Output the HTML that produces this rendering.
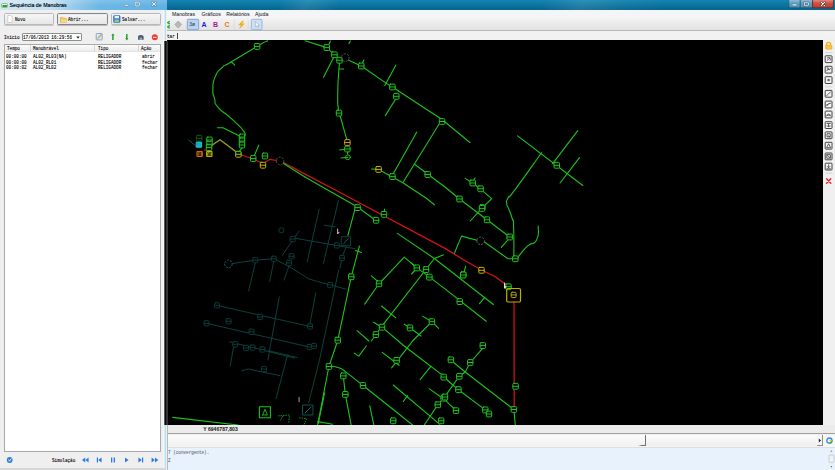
<!DOCTYPE html>
<html lang="pt">
<head>
<meta charset="utf-8">
<title>Sequência de Manobras</title>
<style>
html,body{margin:0;padding:0;}
body{width:835px;height:470px;overflow:hidden;position:relative;background:#f0f0f0;font-family:"Liberation Sans",sans-serif;}
.abs{position:absolute;}
.t{position:absolute;white-space:nowrap;line-height:1;color:#222;}
.mono{font-family:"Liberation Mono",monospace;font-size:17.2px !important;transform:scale(0.25,0.315);transform-origin:0 0;color:#0a0a0a;text-shadow:0 0 1.4px rgba(0,0,0,0.5);}
/* left window */
#ltitle{left:0;top:0;width:167px;height:10.4px;background:linear-gradient(rgba(255,255,255,0.16),rgba(255,255,255,0) 60%),linear-gradient(90deg,#cfe7f6 0%,#c2e0f4 30%,#9ccdec 42%,#84c2e8 50%,#6ab7e5 60%,#5fb1e3 100%);}
#lbody{left:0;top:10px;width:164px;height:458px;background:#efefef;}
#lborderR{left:163px;top:10px;width:3.3px;height:460px;background:linear-gradient(90deg,#f6f9fb 0%,#f0f6fa 45%,#bfe2f2 55%,#b5dcef 100%);}
#mapedge{left:163.8px;top:40.5px;width:4px;height:384.5px;background:linear-gradient(90deg,#c9c9cc 0%,#5a5a5c 12%,#060608 25%,#0a0a0c 40%,#303032 55%,#363638 88%,#101010 100%);}
#lbottom{left:0;top:468px;width:166px;height:2px;background:#d6d6d6;}
.btn{position:absolute;top:13px;height:12px;border:1px solid #b8b8b8;border-radius:1.5px;background:linear-gradient(#f6f6f6,#e6e6e6);box-sizing:border-box;box-shadow:0 1px 0 #c9c9c9;}
#table{left:4px;top:44px;width:157px;height:408px;background:#fff;border:1px solid #a9a9a9;box-sizing:border-box;}
#thead{left:5px;top:45px;width:155px;height:6px;background:linear-gradient(#fbfbfb,#ececec);}
/* main window */
#mtitle{left:167px;top:0;width:668px;height:10.4px;background:linear-gradient(115deg,rgba(255,255,255,0) 0%,rgba(255,255,255,0) 17%,rgba(255,255,255,0.10) 21%,rgba(255,255,255,0) 26%,rgba(255,255,255,0) 56%,rgba(255,255,255,0.10) 62%,rgba(255,255,255,0.04) 68%,rgba(255,255,255,0) 74%),linear-gradient(#1585b1 0%,#0c76a2 45%,#07648e 100%);}
#menubar{left:167px;top:10px;width:668px;height:9px;background:#f4f5f7;}
#toolbar{left:167px;top:18px;width:668px;height:13px;background:linear-gradient(#f3f3f3,#e2e2e2);border-bottom:1px solid #b9b9b9;box-sizing:border-box;}
#bar2{left:167px;top:31px;width:668px;height:9.5px;background:#f2f2f2;}
#map{left:167px;top:40.4px;width:655.5px;height:384.5px;background:#000;}
#rtool{left:822.5px;top:39px;width:12.5px;height:386px;background:#f0f0f0;}
#status{left:167px;top:425px;width:668px;height:9px;background:#ebebeb;}
#statusline{left:167px;top:433.4px;width:668px;height:1px;background:#a0a0a0;}
#hscroll{left:167px;top:435px;width:668px;height:12px;background:#f6f6f6;}
#console{left:167px;top:447px;width:668px;height:23px;background:#e7f2fc;border-top:1px solid #dcdfe2;box-sizing:border-box;}
</style>
</head>
<body>
<!-- ===== main window ===== -->
<div class="abs" id="mtitle"></div>
<div class="abs" id="menubar"></div>
<div class="abs" id="toolbar"></div>
<div class="abs" id="bar2"></div>
<div class="abs" id="map"></div>
<!--MAP--><svg class="abs" id="mapsvg" style="left:167px;top:40px" width="656" height="385" viewBox="0 0 656 385" fill="none" stroke-linecap="round" stroke-linejoin="round">
<polyline points="65.6,223.5 88.3,220.2 106.8,218.8 122.0,226.4 142.0,239.0 150.6,241.5 179.3,249.2" stroke="#0c423d" stroke-width="1.0" />
<polyline points="115.2,215.5 132.0,191.1" stroke="#0c423d" stroke-width="1.0" />
<polyline points="125.6,197.8 188.0,208.7" stroke="#0c423d" stroke-width="1.0" />
<polyline points="152.2,169.2 140.1,222.2" stroke="#0c423d" stroke-width="1.0" />
<polyline points="171.5,160.0 156.4,223.5" stroke="#0c423d" stroke-width="1.0" />
<polyline points="157.2,185.2 168.2,186.9" stroke="#0c423d" stroke-width="1.0" />
<polyline points="88.3,223.0 81.6,251.0" stroke="#0c423d" stroke-width="1.0" />
<polyline points="106.8,221.3 102.7,241.5" stroke="#0c423d" stroke-width="1.0" />
<polyline points="122.0,226.0 117.0,240.0" stroke="#0c423d" stroke-width="1.0" />
<polyline points="50.0,265.4 143.0,286.5" stroke="#0c423d" stroke-width="1.0" />
<polyline points="39.5,283.3 144.9,307.6" stroke="#0c423d" stroke-width="1.0" />
<polyline points="62.5,301.8 127.6,318.1" stroke="#0c423d" stroke-width="1.0" />
<polyline points="112.3,256.8 100.8,320.0" stroke="#0c423d" stroke-width="1.0" />
<polyline points="171.7,230.0 152.5,320.0 141.7,362.5" stroke="#0c423d" stroke-width="1.0" />
<polyline points="148.7,253.0 143.0,283.6" stroke="#0c423d" stroke-width="1.0" />
<polyline points="67.0,305.0 63.1,326.0" stroke="#0c423d" stroke-width="1.0" />
<polyline points="74.6,330.9 81.0,329.0 113.0,335.6" stroke="#0c423d" stroke-width="1.0" />
<polyline points="120.6,314.6 109.1,358.6" stroke="#0c423d" stroke-width="1.0" />
<polyline points="101.4,310.7 130.2,317.5" stroke="#0c423d" stroke-width="1.0" />
<polyline points="179.0,207.0 174.9,218.0 173.0,228.0" stroke="#0c423d" stroke-width="1.0" />
<rect x="123.2" y="196.4" width="4.9" height="5.2" rx="0.9" stroke="#0c423d" stroke-width="0.9" fill="#000"/>
<line x1="123.2" y1="199.0" x2="128.0" y2="199.0" stroke="#0c423d" stroke-width="0.9"/>
<rect x="85.9" y="217.6" width="4.9" height="5.2" rx="0.9" stroke="#0c423d" stroke-width="0.9" fill="#000"/>
<line x1="85.9" y1="220.2" x2="90.7" y2="220.2" stroke="#0c423d" stroke-width="0.9"/>
<rect x="104.4" y="216.2" width="4.9" height="5.2" rx="0.9" stroke="#0c423d" stroke-width="0.9" fill="#000"/>
<line x1="104.4" y1="218.8" x2="109.2" y2="218.8" stroke="#0c423d" stroke-width="0.9"/>
<rect x="122.1" y="213.7" width="4.9" height="5.2" rx="0.9" stroke="#0c423d" stroke-width="0.9" fill="#000"/>
<line x1="122.1" y1="216.3" x2="126.9" y2="216.3" stroke="#0c423d" stroke-width="0.9"/>
<rect x="119.6" y="220.4" width="4.9" height="5.2" rx="0.9" stroke="#0c423d" stroke-width="0.9" fill="#000"/>
<line x1="119.6" y1="223.0" x2="124.4" y2="223.0" stroke="#0c423d" stroke-width="0.9"/>
<rect x="167.4" y="202.8" width="4.9" height="5.2" rx="0.9" stroke="#0c423d" stroke-width="0.9" fill="#000"/>
<line x1="167.4" y1="205.4" x2="172.2" y2="205.4" stroke="#0c423d" stroke-width="0.9"/>
<rect x="172.5" y="215.4" width="4.9" height="5.2" rx="0.9" stroke="#0c423d" stroke-width="0.9" fill="#000"/>
<line x1="172.5" y1="218.0" x2="177.3" y2="218.0" stroke="#0c423d" stroke-width="0.9"/>
<rect x="47.6" y="262.8" width="4.9" height="5.2" rx="0.9" stroke="#0c423d" stroke-width="0.9" fill="#000"/>
<line x1="47.6" y1="265.4" x2="52.4" y2="265.4" stroke="#0c423d" stroke-width="0.9"/>
<rect x="90.7" y="274.3" width="4.9" height="5.2" rx="0.9" stroke="#0c423d" stroke-width="0.9" fill="#000"/>
<line x1="90.7" y1="276.9" x2="95.5" y2="276.9" stroke="#0c423d" stroke-width="0.9"/>
<rect x="140.6" y="283.9" width="4.9" height="5.2" rx="0.9" stroke="#0c423d" stroke-width="0.9" fill="#000"/>
<line x1="140.6" y1="286.5" x2="145.4" y2="286.5" stroke="#0c423d" stroke-width="0.9"/>
<rect x="37.1" y="280.7" width="4.9" height="5.2" rx="0.9" stroke="#0c423d" stroke-width="0.9" fill="#000"/>
<line x1="37.1" y1="283.3" x2="41.9" y2="283.3" stroke="#0c423d" stroke-width="0.9"/>
<rect x="59.1" y="278.7" width="4.9" height="5.2" rx="0.9" stroke="#0c423d" stroke-width="0.9" fill="#000"/>
<line x1="59.1" y1="281.3" x2="63.9" y2="281.3" stroke="#0c423d" stroke-width="0.9"/>
<rect x="82.1" y="289.1" width="4.9" height="5.2" rx="0.9" stroke="#0c423d" stroke-width="0.9" fill="#000"/>
<line x1="82.1" y1="291.7" x2="86.9" y2="291.7" stroke="#0c423d" stroke-width="0.9"/>
<rect x="140.1" y="304.4" width="4.9" height="5.2" rx="0.9" stroke="#0c423d" stroke-width="0.9" fill="#000"/>
<line x1="140.1" y1="307.0" x2="144.9" y2="307.0" stroke="#0c423d" stroke-width="0.9"/>
<rect x="144.6" y="303.4" width="4.9" height="5.2" rx="0.9" stroke="#0c423d" stroke-width="0.9" fill="#000"/>
<line x1="144.6" y1="306.0" x2="149.4" y2="306.0" stroke="#0c423d" stroke-width="0.9"/>
<rect x="65.8" y="301.7" width="4.9" height="5.2" rx="0.9" stroke="#0c423d" stroke-width="0.9" fill="#000"/>
<line x1="65.8" y1="304.3" x2="70.6" y2="304.3" stroke="#0c423d" stroke-width="0.9"/>
<rect x="83.1" y="305.0" width="4.9" height="5.2" rx="0.9" stroke="#0c423d" stroke-width="0.9" fill="#000"/>
<line x1="83.1" y1="307.6" x2="87.9" y2="307.6" stroke="#0c423d" stroke-width="0.9"/>
<rect x="93.0" y="306.9" width="4.9" height="5.2" rx="0.9" stroke="#0c423d" stroke-width="0.9" fill="#000"/>
<line x1="93.0" y1="309.5" x2="97.8" y2="309.5" stroke="#0c423d" stroke-width="0.9"/>
<rect x="160.6" y="242.4" width="4.9" height="5.2" rx="0.9" stroke="#0c423d" stroke-width="0.9" fill="#000"/>
<line x1="160.6" y1="245.0" x2="165.4" y2="245.0" stroke="#0c423d" stroke-width="0.9"/>
<rect x="94.6" y="326.4" width="4.9" height="5.2" rx="0.9" stroke="#0c423d" stroke-width="0.9" fill="#000"/>
<line x1="94.6" y1="329.0" x2="99.4" y2="329.0" stroke="#0c423d" stroke-width="0.9"/>
<rect x="76.6" y="305.4" width="4.9" height="5.2" rx="0.9" stroke="#0c423d" stroke-width="0.9" fill="#000"/>
<line x1="76.6" y1="308.0" x2="81.4" y2="308.0" stroke="#0c423d" stroke-width="0.9"/>
<circle cx="114.4" cy="190.3" r="2.6" stroke="#0c423d" stroke-width="0.9" stroke-dasharray="none" stroke-linecap="butt"/>
<circle cx="61.4" cy="223.9" r="3.8" stroke="#1f5f5a" stroke-width="1" stroke-dasharray="2.2 1" stroke-linecap="butt"/>
<rect x="174.6" y="196.7" width="9" height="9" stroke="#0c423d" stroke-width="1" fill="none"/>
<polyline points="176.5,204.0 181.5,198.5" stroke="#16635c" stroke-width="1" />
<rect x="136.0" y="365.0" width="10" height="10" stroke="#11544d" stroke-width="1" fill="none"/>
<polyline points="138.0,373.0 144.0,367.0" stroke="#1a7068" stroke-width="1" />
<path d="M100.5 0.8 C97.0 2.7 102.1 -0.6 90.1 6.4 C78.1 13.4 76.1 14.7 64.4 21.8 C52.7 28.9 60.4 22.9 55.1 27.7 C49.8 32.5 51.5 29.1 48.4 36.1 C45.3 43.1 46.2 41.1 45.9 48.7 C45.6 56.3 45.9 52.6 47.6 58.8 C49.3 65.0 45.3 60.6 50.9 67.2 C56.5 73.8 55.7 70.6 64.4 78.7 C73.1 86.8 73.3 85.8 77.0 91.6 C80.7 97.4 76.0 94.5 75.5 96.0" stroke="#1bc51b" stroke-width="1.1"/>
<polyline points="64.4,21.8 67.7,25.2" stroke="#1bc51b" stroke-width="1.1" />
<polyline points="50.4,87.7 56.0,87.7 72.0,95.8" stroke="#1bc51b" stroke-width="1.1" />
<polyline points="75.0,95.0 75.0,108.0 72.5,111.2" stroke="#1bc51b" stroke-width="1.1" />
<polyline points="91.8,105.0 86.2,118.5" stroke="#1bc51b" stroke-width="1.1" />
<polyline points="138.0,0.8 159.8,7.6 167.4,14.8 172.5,19.3" stroke="#1bc51b" stroke-width="1.1" />
<polyline points="181.7,20.2 194.3,26.0 218.7,42.9 225.4,47.0 275.0,79.5 302.9,102.5" stroke="#1bc51b" stroke-width="1.1" />
<polyline points="167.4,16.0 156.5,37.3" stroke="#1bc51b" stroke-width="1.1" />
<path d="M172.5 21.8 C171.9 31.3 171.1 34.1 170.8 50.4 C170.5 66.7 170.5 61.1 171.6 70.6 C172.7 80.1 171.3 69.5 174.0 79.0 C176.7 88.5 177.8 92.5 179.7 99.2" stroke="#1bc51b" stroke-width="1.1"/>
<polyline points="172.5,29.0 176.7,29.0" stroke="#1bc51b" stroke-width="1.1" />
<polyline points="228.8,25.2 217.8,45.4" stroke="#1bc51b" stroke-width="1.1" />
<polyline points="229.3,58.0 218.3,75.6" stroke="#1bc51b" stroke-width="1.1" />
<polyline points="163.5,1.0 161.7,5.0" stroke="#1bc51b" stroke-width="1.1" />
<polyline points="183.4,1.0 182.0,3.4" stroke="#1bc51b" stroke-width="1.1" />
<polyline points="196.8,20.0 195.0,24.5" stroke="#1bc51b" stroke-width="1.1" />
<polyline points="172.5,110.0 180.4,109.0" stroke="#1bc51b" stroke-width="1.1" />
<polyline points="174.0,118.0 180.9,117.3" stroke="#1bc51b" stroke-width="1.1" />
<polyline points="180.4,105.0 180.6,114.0" stroke="#1bc51b" stroke-width="1.1" />
<polyline points="204.4,129.0 211.6,129.4 225.4,137.0 235.5,142.5 259.0,158.0 267.4,164.8" stroke="#1bc51b" stroke-width="1.1" />
<polyline points="225.4,135.3 249.8,92.1" stroke="#1bc51b" stroke-width="1.1" />
<polyline points="236.3,142.0 274.0,81.0" stroke="#1bc51b" stroke-width="1.1" />
<polyline points="247.2,124.0 278.0,147.0 292.5,159.0 320.0,179.8 342.7,197.0" stroke="#1bc51b" stroke-width="1.1" />
<polyline points="350.6,95.9 415.8,145.5" stroke="#1bc51b" stroke-width="1.1" />
<polyline points="410.8,90.6 385.6,123.6" stroke="#1bc51b" stroke-width="1.1" />
<polyline points="412.5,117.7 393.1,143.0" stroke="#1bc51b" stroke-width="1.1" />
<path d="M374.6 112.7 C365.9 124.7 359.8 133.7 348.6 148.8 C337.4 163.9 343.9 152.9 341.0 158.0 C338.1 163.1 339.6 160.5 339.8 164.0 C340.0 167.5 339.7 163.6 341.5 168.4 C343.3 173.2 343.5 172.3 345.2 178.5 C346.9 184.7 346.0 174.0 346.6 186.9 C347.2 199.8 346.8 207.0 346.9 217.1" stroke="#1bc51b" stroke-width="1.1"/>
<polyline points="298.2,138.4 305.7,143.0 313.3,148.8 324.7,158.6 315.8,167.3 303.2,181.0" stroke="#1bc51b" stroke-width="1.1" />
<polyline points="308.0,138.0 305.7,142.0" stroke="#1bc51b" stroke-width="1.1" />
<polyline points="342.7,197.8 334.3,207.4" stroke="#1bc51b" stroke-width="1.1" />
<polyline points="287.2,213.8 294.5,196.1 309.9,200.3" stroke="#1bc51b" stroke-width="1.1" />
<polyline points="317.5,202.0 341.0,218.8 348.0,218.8" stroke="#1bc51b" stroke-width="1.1" />
<path d="M350.3 218.0 C353.7 214.1 354.0 212.2 360.4 206.2 C366.8 200.2 366.0 206.7 369.6 200.0 C373.2 193.3 370.7 190.7 371.3 186.0" stroke="#1bc51b" stroke-width="1.1"/>
<polyline points="138.0,137.0 160.7,150.0 190.1,166.8 208.6,180.3" stroke="#1bc51b" stroke-width="1.1" />
<polyline points="217.6,169.0 217.3,172.0" stroke="#1bc51b" stroke-width="1.1" />
<polyline points="188.6,166.8 180.9,195.4" stroke="#1bc51b" stroke-width="1.1" />
<polyline points="192.4,206.0 184.2,236.8 170.8,300.2 161.9,326.5 150.6,385.0" stroke="#1bc51b" stroke-width="1.1" />
<polyline points="188.5,210.5 194.5,212.5" stroke="#1bc51b" stroke-width="1.1" />
<polyline points="230.4,193.4 267.4,218.5 282.2,230.0 326.4,264.5" stroke="#1bc51b" stroke-width="1.1" />
<polyline points="197.7,264.1 211.8,244.0 226.7,228.3 237.2,217.1 247.2,225.6 262.4,237.1 278.0,248.9 319.2,281.3" stroke="#1bc51b" stroke-width="1.1" />
<polyline points="276.5,214.8 267.4,218.5 214.5,286.7 204.4,301.0" stroke="#1bc51b" stroke-width="1.1" />
<polyline points="243.9,222.8 249.8,227.9" stroke="#1bc51b" stroke-width="1.1" />
<polyline points="249.8,228.5 244.5,234.0" stroke="#1bc51b" stroke-width="1.1" />
<polyline points="204.4,235.8 212.0,242.5" stroke="#1bc51b" stroke-width="1.1" />
<polyline points="214.5,266.0 228.8,277.8" stroke="#1bc51b" stroke-width="1.1" />
<polyline points="206.6,282.2 215.0,287.2 231.3,301.0 237.2,306.0 278.0,337.1" stroke="#1bc51b" stroke-width="1.1" />
<polyline points="190.1,290.6 201.9,301.0" stroke="#1bc51b" stroke-width="1.1" />
<polyline points="237.2,284.2 243.0,287.9 254.0,296.0" stroke="#1bc51b" stroke-width="1.1" />
<polyline points="255.6,276.1 264.9,281.7 271.6,288.4" stroke="#1bc51b" stroke-width="1.1" />
<polyline points="264.9,281.7 245.6,301.0 240.5,307.7 224.6,327.8" stroke="#1bc51b" stroke-width="1.1" />
<polyline points="317.5,257.7 312.5,263.6" stroke="#1bc51b" stroke-width="1.1" />
<polyline points="298.7,226.4 296.2,234.8" stroke="#1bc51b" stroke-width="1.1" />
<path d="M161.9 326.5 C165.1 326.9 165.6 325.7 171.6 327.8 C177.6 329.9 171.9 327.0 180.0 332.9 C188.1 338.8 174.1 328.1 196.0 345.5 C217.9 362.9 229.1 371.8 245.6 385.0" stroke="#1bc51b" stroke-width="1.1"/>
<polyline points="176.3,335.9 178.3,354.4 184.2,385.0" stroke="#1bc51b" stroke-width="1.1" />
<polyline points="202.7,365.7 206.9,385.0" stroke="#1bc51b" stroke-width="1.1" />
<polyline points="199.3,306.0 191.8,316.1 187.1,313.1" stroke="#1bc51b" stroke-width="1.1" />
<polyline points="215.3,312.4 232.1,325.3" stroke="#1bc51b" stroke-width="1.1" />
<polyline points="264.0,326.2 253.1,339.6" stroke="#1bc51b" stroke-width="1.1" />
<polyline points="226.2,345.0 272.5,384.2" stroke="#1bc51b" stroke-width="1.1" />
<polyline points="240.5,355.6 236.3,361.5" stroke="#1bc51b" stroke-width="1.1" />
<polyline points="262.4,348.9 278.0,359.8 289.0,370.7" stroke="#1bc51b" stroke-width="1.1" />
<polyline points="270.8,364.8 257.3,385.0" stroke="#1bc51b" stroke-width="1.1" />
<polyline points="150.6,381.6 165.7,384.2" stroke="#1bc51b" stroke-width="1.1" />
<polyline points="283.9,320.3 298.2,332.0 346.9,369.5" stroke="#1bc51b" stroke-width="1.1" />
<polyline points="316.3,307.7 303.2,322.5 298.2,332.0 292.3,336.3 278.0,356.4 270.8,364.8" stroke="#1bc51b" stroke-width="1.1" />
<polyline points="278.0,338.0 286.4,345.5 291.4,349.7 318.3,369.9 322.0,374.0" stroke="#1bc51b" stroke-width="1.1" />
<polyline points="346.9,369.5 348.3,385.0" stroke="#1bc51b" stroke-width="1.1" />
<polyline points="5.7,377.4 71.0,385.0" stroke="#1bc51b" stroke-width="1.1" />
<polyline points="157.6,352.9 151.3,383.5" stroke="#1bc51b" stroke-width="1.1" />
<polyline points="111.0,375.9 122.5,375.0 121.6,383.5" stroke="#11901a" stroke-width="1.0" stroke-dasharray="1.6 0.9" stroke-linecap="butt"/>
<polyline points="116.0,376.0 113.0,381.0" stroke="#11901a" stroke-width="1.0" stroke-dasharray="1.6 0.9" stroke-linecap="butt"/>
<polyline points="132.1,377.8 139.8,378.8 137.0,384.5" stroke="#11901a" stroke-width="1.0" stroke-dasharray="1.6 0.9" stroke-linecap="butt"/>
<polyline points="37.5,110.0 45.0,111.5" stroke="#d41414" stroke-width="1.2" />
<polyline points="71.4,114.0 86.2,119.0 96.0,123.5 103.0,119.3 109.5,120.5" stroke="#d41414" stroke-width="1.2" />
<polyline points="116.5,122.5 138.0,134.1 168.3,150.0 278.0,208.4 296.5,219.7 314.1,229.7 328.4,236.7 338.5,244.3" stroke="#d41414" stroke-width="1.25" />
<polyline points="347.0,262.0 347.2,367.0" stroke="#d41414" stroke-width="1.25" />
<polyline points="116.5,123.5 138.0,137.0" stroke="#1bc51b" stroke-width="1.1" />
<polyline points="45.3,105.4 53.0,100.1 69.7,112.5" stroke="#c8501a" stroke-width="1.1" />
<polyline points="45.3,104.8 53.0,99.5 69.7,111.9" stroke="#5cc81e" stroke-width="1.0" />
<polyline points="21.5,100.0 29.0,106.0" stroke="#14504a" stroke-width="1" />
<rect x="87.4" y="3.5" width="5.4" height="5.8" rx="0.9" stroke="#1bc51b" stroke-width="1.0" fill="#000"/>
<line x1="87.4" y1="6.4" x2="92.8" y2="6.4" stroke="#1bc51b" stroke-width="1.0"/>
<rect x="72.3" y="94.1" width="5.4" height="5.8" rx="0.9" stroke="#1bc51b" stroke-width="1.0" fill="#000"/>
<line x1="72.3" y1="97.0" x2="77.7" y2="97.0" stroke="#1bc51b" stroke-width="1.0"/>
<rect x="72.3" y="98.1" width="5.4" height="5.8" rx="0.9" stroke="#1bc51b" stroke-width="1.0" fill="#000"/>
<line x1="72.3" y1="101.0" x2="77.7" y2="101.0" stroke="#1bc51b" stroke-width="1.0"/>
<rect x="72.3" y="102.1" width="5.4" height="5.8" rx="0.9" stroke="#1bc51b" stroke-width="1.0" fill="#000"/>
<line x1="72.3" y1="105.0" x2="77.7" y2="105.0" stroke="#1bc51b" stroke-width="1.0"/>
<rect x="157.1" y="4.7" width="5.4" height="5.8" rx="0.9" stroke="#1bc51b" stroke-width="1.0" fill="#000"/>
<line x1="157.1" y1="7.6" x2="162.5" y2="7.6" stroke="#1bc51b" stroke-width="1.0"/>
<rect x="164.7" y="11.9" width="5.4" height="5.8" rx="0.9" stroke="#1bc51b" stroke-width="1.0" fill="#000"/>
<line x1="164.7" y1="14.8" x2="170.1" y2="14.8" stroke="#1bc51b" stroke-width="1.0"/>
<rect x="169.8" y="17.3" width="5.4" height="5.8" rx="0.9" stroke="#1bc51b" stroke-width="1.0" fill="#000"/>
<line x1="169.8" y1="20.2" x2="175.2" y2="20.2" stroke="#1bc51b" stroke-width="1.0"/>
<rect x="191.6" y="23.1" width="5.4" height="5.8" rx="0.9" stroke="#1bc51b" stroke-width="1.0" fill="#000"/>
<line x1="191.6" y1="26.0" x2="197.0" y2="26.0" stroke="#1bc51b" stroke-width="1.0"/>
<rect x="222.7" y="44.1" width="5.4" height="5.8" rx="0.9" stroke="#1bc51b" stroke-width="1.0" fill="#000"/>
<line x1="222.7" y1="47.0" x2="228.1" y2="47.0" stroke="#1bc51b" stroke-width="1.0"/>
<rect x="226.6" y="53.4" width="5.4" height="5.8" rx="0.9" stroke="#1bc51b" stroke-width="1.0" fill="#000"/>
<line x1="226.6" y1="56.3" x2="232.0" y2="56.3" stroke="#1bc51b" stroke-width="1.0"/>
<rect x="169.3" y="70.2" width="5.4" height="5.8" rx="0.9" stroke="#1bc51b" stroke-width="1.0" fill="#000"/>
<line x1="169.3" y1="73.1" x2="174.7" y2="73.1" stroke="#1bc51b" stroke-width="1.0"/>
<rect x="272.3" y="78.6" width="5.4" height="5.8" rx="0.9" stroke="#1bc51b" stroke-width="1.0" fill="#000"/>
<line x1="272.3" y1="81.5" x2="277.7" y2="81.5" stroke="#1bc51b" stroke-width="1.0"/>
<rect x="177.7" y="106.1" width="5.4" height="5.8" rx="0.9" stroke="#1bc51b" stroke-width="1.0" fill="#000"/>
<line x1="177.7" y1="109.0" x2="183.1" y2="109.0" stroke="#1bc51b" stroke-width="1.0"/>
<rect x="222.7" y="133.7" width="5.4" height="5.8" rx="0.9" stroke="#1bc51b" stroke-width="1.0" fill="#000"/>
<line x1="222.7" y1="136.6" x2="228.1" y2="136.6" stroke="#1bc51b" stroke-width="1.0"/>
<rect x="258.0" y="131.6" width="5.4" height="5.8" rx="0.9" stroke="#1bc51b" stroke-width="1.0" fill="#000"/>
<line x1="258.0" y1="134.5" x2="263.4" y2="134.5" stroke="#1bc51b" stroke-width="1.0"/>
<rect x="387.1" y="122.4" width="5.4" height="5.8" rx="0.9" stroke="#1bc51b" stroke-width="1.0" fill="#000"/>
<line x1="387.1" y1="125.3" x2="392.5" y2="125.3" stroke="#1bc51b" stroke-width="1.0"/>
<rect x="289.8" y="156.1" width="5.4" height="5.8" rx="0.9" stroke="#1bc51b" stroke-width="1.0" fill="#000"/>
<line x1="289.8" y1="159.0" x2="295.2" y2="159.0" stroke="#1bc51b" stroke-width="1.0"/>
<rect x="303.0" y="140.1" width="5.4" height="5.8" rx="0.9" stroke="#1bc51b" stroke-width="1.0" fill="#000"/>
<line x1="303.0" y1="143.0" x2="308.4" y2="143.0" stroke="#1bc51b" stroke-width="1.0"/>
<rect x="310.9" y="145.9" width="5.4" height="5.8" rx="0.9" stroke="#1bc51b" stroke-width="1.0" fill="#000"/>
<line x1="310.9" y1="148.8" x2="316.3" y2="148.8" stroke="#1bc51b" stroke-width="1.0"/>
<rect x="312.6" y="164.7" width="5.4" height="5.8" rx="0.9" stroke="#1bc51b" stroke-width="1.0" fill="#000"/>
<line x1="312.6" y1="167.6" x2="318.0" y2="167.6" stroke="#1bc51b" stroke-width="1.0"/>
<rect x="317.3" y="176.9" width="5.4" height="5.8" rx="0.9" stroke="#1bc51b" stroke-width="1.0" fill="#000"/>
<line x1="317.3" y1="179.8" x2="322.7" y2="179.8" stroke="#1bc51b" stroke-width="1.0"/>
<rect x="340.0" y="194.1" width="5.4" height="5.8" rx="0.9" stroke="#1bc51b" stroke-width="1.0" fill="#000"/>
<line x1="340.0" y1="197.0" x2="345.4" y2="197.0" stroke="#1bc51b" stroke-width="1.0"/>
<rect x="312.3" y="165.5" width="5.4" height="5.8" rx="0.9" stroke="#1bc51b" stroke-width="1.0" fill="#000"/>
<line x1="312.3" y1="168.4" x2="317.7" y2="168.4" stroke="#1bc51b" stroke-width="1.0"/>
<rect x="345.6" y="215.9" width="5.4" height="5.8" rx="0.9" stroke="#1bc51b" stroke-width="1.0" fill="#000"/>
<line x1="345.6" y1="218.8" x2="351.0" y2="218.8" stroke="#1bc51b" stroke-width="1.0"/>
<rect x="293.5" y="231.9" width="5.4" height="5.8" rx="0.9" stroke="#1bc51b" stroke-width="1.0" fill="#000"/>
<line x1="293.5" y1="234.8" x2="298.9" y2="234.8" stroke="#1bc51b" stroke-width="1.0"/>
<rect x="187.9" y="164.7" width="5.4" height="5.8" rx="0.9" stroke="#1bc51b" stroke-width="1.0" fill="#000"/>
<line x1="187.9" y1="167.6" x2="193.3" y2="167.6" stroke="#1bc51b" stroke-width="1.0"/>
<rect x="206.4" y="177.4" width="5.4" height="5.8" rx="0.9" stroke="#1bc51b" stroke-width="1.0" fill="#000"/>
<line x1="206.4" y1="180.3" x2="211.8" y2="180.3" stroke="#1bc51b" stroke-width="1.0"/>
<rect x="214.3" y="171.5" width="5.4" height="5.8" rx="0.9" stroke="#1bc51b" stroke-width="1.0" fill="#000"/>
<line x1="214.3" y1="174.4" x2="219.7" y2="174.4" stroke="#1bc51b" stroke-width="1.0"/>
<rect x="181.5" y="233.9" width="5.4" height="5.8" rx="0.9" stroke="#1bc51b" stroke-width="1.0" fill="#000"/>
<line x1="181.5" y1="236.8" x2="186.9" y2="236.8" stroke="#1bc51b" stroke-width="1.0"/>
<rect x="168.1" y="297.3" width="5.4" height="5.8" rx="0.9" stroke="#1bc51b" stroke-width="1.0" fill="#000"/>
<line x1="168.1" y1="300.2" x2="173.5" y2="300.2" stroke="#1bc51b" stroke-width="1.0"/>
<rect x="209.3" y="240.9" width="5.4" height="5.8" rx="0.9" stroke="#1bc51b" stroke-width="1.0" fill="#000"/>
<line x1="209.3" y1="243.8" x2="214.7" y2="243.8" stroke="#1bc51b" stroke-width="1.0"/>
<rect x="256.3" y="226.7" width="5.4" height="5.8" rx="0.9" stroke="#1bc51b" stroke-width="1.0" fill="#000"/>
<line x1="256.3" y1="229.6" x2="261.7" y2="229.6" stroke="#1bc51b" stroke-width="1.0"/>
<rect x="212.3" y="284.3" width="5.4" height="5.8" rx="0.9" stroke="#1bc51b" stroke-width="1.0" fill="#000"/>
<line x1="212.3" y1="287.2" x2="217.7" y2="287.2" stroke="#1bc51b" stroke-width="1.0"/>
<rect x="206.2" y="291.7" width="5.4" height="5.8" rx="0.9" stroke="#1bc51b" stroke-width="1.0" fill="#000"/>
<line x1="206.2" y1="294.6" x2="211.6" y2="294.6" stroke="#1bc51b" stroke-width="1.0"/>
<rect x="247.1" y="225.0" width="5.4" height="5.8" rx="0.9" stroke="#1bc51b" stroke-width="1.0" fill="#000"/>
<line x1="247.1" y1="227.9" x2="252.5" y2="227.9" stroke="#1bc51b" stroke-width="1.0"/>
<rect x="259.7" y="234.2" width="5.4" height="5.8" rx="0.9" stroke="#1bc51b" stroke-width="1.0" fill="#000"/>
<line x1="259.7" y1="237.1" x2="265.1" y2="237.1" stroke="#1bc51b" stroke-width="1.0"/>
<rect x="240.3" y="285.0" width="5.4" height="5.8" rx="0.9" stroke="#1bc51b" stroke-width="1.0" fill="#000"/>
<line x1="240.3" y1="287.9" x2="245.7" y2="287.9" stroke="#1bc51b" stroke-width="1.0"/>
<rect x="262.2" y="278.8" width="5.4" height="5.8" rx="0.9" stroke="#1bc51b" stroke-width="1.0" fill="#000"/>
<line x1="262.2" y1="281.7" x2="267.6" y2="281.7" stroke="#1bc51b" stroke-width="1.0"/>
<rect x="338.8" y="243.9" width="5.4" height="5.8" rx="0.9" stroke="#1bc51b" stroke-width="1.0" fill="#000"/>
<line x1="338.8" y1="246.8" x2="344.2" y2="246.8" stroke="#1bc51b" stroke-width="1.0"/>
<rect x="293.5" y="232.1" width="5.4" height="5.8" rx="0.9" stroke="#1bc51b" stroke-width="1.0" fill="#000"/>
<line x1="293.5" y1="235.0" x2="298.9" y2="235.0" stroke="#1bc51b" stroke-width="1.0"/>
<rect x="290.1" y="258.7" width="5.4" height="5.8" rx="0.9" stroke="#1bc51b" stroke-width="1.0" fill="#000"/>
<line x1="290.1" y1="261.6" x2="295.5" y2="261.6" stroke="#1bc51b" stroke-width="1.0"/>
<rect x="313.1" y="302.7" width="5.4" height="5.8" rx="0.9" stroke="#1bc51b" stroke-width="1.0" fill="#000"/>
<line x1="313.1" y1="305.6" x2="318.5" y2="305.6" stroke="#1bc51b" stroke-width="1.0"/>
<rect x="159.2" y="323.6" width="5.4" height="5.8" rx="0.9" stroke="#1bc51b" stroke-width="1.0" fill="#000"/>
<line x1="159.2" y1="326.5" x2="164.6" y2="326.5" stroke="#1bc51b" stroke-width="1.0"/>
<rect x="193.3" y="342.6" width="5.4" height="5.8" rx="0.9" stroke="#1bc51b" stroke-width="1.0" fill="#000"/>
<line x1="193.3" y1="345.5" x2="198.7" y2="345.5" stroke="#1bc51b" stroke-width="1.0"/>
<rect x="173.6" y="333.0" width="5.4" height="5.8" rx="0.9" stroke="#1bc51b" stroke-width="1.0" fill="#000"/>
<line x1="173.6" y1="335.9" x2="179.0" y2="335.9" stroke="#1bc51b" stroke-width="1.0"/>
<rect x="175.6" y="351.5" width="5.4" height="5.8" rx="0.9" stroke="#1bc51b" stroke-width="1.0" fill="#000"/>
<line x1="175.6" y1="354.4" x2="181.0" y2="354.4" stroke="#1bc51b" stroke-width="1.0"/>
<rect x="226.9" y="317.4" width="5.4" height="5.8" rx="0.9" stroke="#1bc51b" stroke-width="1.0" fill="#000"/>
<line x1="226.9" y1="320.3" x2="232.3" y2="320.3" stroke="#1bc51b" stroke-width="1.0"/>
<rect x="274.0" y="334.2" width="5.4" height="5.8" rx="0.9" stroke="#1bc51b" stroke-width="1.0" fill="#000"/>
<line x1="274.0" y1="337.1" x2="279.4" y2="337.1" stroke="#1bc51b" stroke-width="1.0"/>
<rect x="274.0" y="355.2" width="5.4" height="5.8" rx="0.9" stroke="#1bc51b" stroke-width="1.0" fill="#000"/>
<line x1="274.0" y1="358.1" x2="279.4" y2="358.1" stroke="#1bc51b" stroke-width="1.0"/>
<rect x="268.1" y="361.9" width="5.4" height="5.8" rx="0.9" stroke="#1bc51b" stroke-width="1.0" fill="#000"/>
<line x1="268.1" y1="364.8" x2="273.5" y2="364.8" stroke="#1bc51b" stroke-width="1.0"/>
<rect x="271.4" y="377.9" width="5.4" height="5.8" rx="0.9" stroke="#1bc51b" stroke-width="1.0" fill="#000"/>
<line x1="271.4" y1="380.8" x2="276.8" y2="380.8" stroke="#1bc51b" stroke-width="1.0"/>
<rect x="223.5" y="377.9" width="5.4" height="5.8" rx="0.9" stroke="#1bc51b" stroke-width="1.0" fill="#000"/>
<line x1="223.5" y1="380.8" x2="228.9" y2="380.8" stroke="#1bc51b" stroke-width="1.0"/>
<rect x="345.9" y="343.4" width="5.4" height="5.8" rx="0.9" stroke="#1bc51b" stroke-width="1.0" fill="#000"/>
<line x1="345.9" y1="346.3" x2="351.3" y2="346.3" stroke="#1bc51b" stroke-width="1.0"/>
<rect x="344.2" y="366.6" width="5.4" height="5.8" rx="0.9" stroke="#1bc51b" stroke-width="1.0" fill="#000"/>
<line x1="344.2" y1="369.5" x2="349.6" y2="369.5" stroke="#1bc51b" stroke-width="1.0"/>
<rect x="281.2" y="316.9" width="5.4" height="5.8" rx="0.9" stroke="#1bc51b" stroke-width="1.0" fill="#000"/>
<line x1="281.2" y1="319.8" x2="286.6" y2="319.8" stroke="#1bc51b" stroke-width="1.0"/>
<rect x="300.5" y="319.6" width="5.4" height="5.8" rx="0.9" stroke="#1bc51b" stroke-width="1.0" fill="#000"/>
<line x1="300.5" y1="322.5" x2="305.9" y2="322.5" stroke="#1bc51b" stroke-width="1.0"/>
<rect x="289.6" y="333.4" width="5.4" height="5.8" rx="0.9" stroke="#1bc51b" stroke-width="1.0" fill="#000"/>
<line x1="289.6" y1="336.3" x2="295.0" y2="336.3" stroke="#1bc51b" stroke-width="1.0"/>
<rect x="288.7" y="346.8" width="5.4" height="5.8" rx="0.9" stroke="#1bc51b" stroke-width="1.0" fill="#000"/>
<line x1="288.7" y1="349.7" x2="294.1" y2="349.7" stroke="#1bc51b" stroke-width="1.0"/>
<rect x="315.6" y="367.0" width="5.4" height="5.8" rx="0.9" stroke="#1bc51b" stroke-width="1.0" fill="#000"/>
<line x1="315.6" y1="369.9" x2="321.0" y2="369.9" stroke="#1bc51b" stroke-width="1.0"/>
<rect x="319.3" y="371.1" width="5.4" height="5.8" rx="0.9" stroke="#1bc51b" stroke-width="1.0" fill="#000"/>
<line x1="319.3" y1="374.0" x2="324.7" y2="374.0" stroke="#1bc51b" stroke-width="1.0"/>
<rect x="286.3" y="367.8" width="5.4" height="5.8" rx="0.9" stroke="#1bc51b" stroke-width="1.0" fill="#000"/>
<line x1="286.3" y1="370.7" x2="291.7" y2="370.7" stroke="#1bc51b" stroke-width="1.0"/>
<rect x="275.3" y="354.1" width="5.4" height="5.8" rx="0.9" stroke="#1bc51b" stroke-width="1.0" fill="#000"/>
<line x1="275.3" y1="357.0" x2="280.7" y2="357.0" stroke="#1bc51b" stroke-width="1.0"/>
<rect x="83.5" y="115.6" width="5.4" height="5.8" rx="0.9" stroke="#1bc51b" stroke-width="1.0" fill="#000"/>
<line x1="83.5" y1="118.5" x2="88.9" y2="118.5" stroke="#1bc51b" stroke-width="1.0"/>
<rect x="95.3" y="113.1" width="5.4" height="5.8" rx="0.9" stroke="#1bc51b" stroke-width="1.0" fill="#000"/>
<line x1="95.3" y1="116.0" x2="100.7" y2="116.0" stroke="#1bc51b" stroke-width="1.0"/>
<rect x="39.8" y="97.1" width="5.4" height="5.8" rx="0.9" stroke="#1bc51b" stroke-width="1.0" fill="#000"/>
<line x1="39.8" y1="100.0" x2="45.2" y2="100.0" stroke="#1bc51b" stroke-width="1.0"/>
<rect x="39.8" y="101.3" width="5.4" height="5.8" rx="0.9" stroke="#1bc51b" stroke-width="1.0" fill="#000"/>
<line x1="39.8" y1="104.2" x2="45.2" y2="104.2" stroke="#1bc51b" stroke-width="1.0"/>
<rect x="39.3" y="104.7" width="5.4" height="5.8" rx="0.9" stroke="#1bc51b" stroke-width="1.0" fill="#000"/>
<line x1="39.3" y1="107.6" x2="44.7" y2="107.6" stroke="#1bc51b" stroke-width="1.0"/>
<circle cx="178.3" cy="17.6" r="3.8" stroke="#566060" stroke-width="1" stroke-dasharray="2 1.2" stroke-linecap="butt"/>
<circle cx="113.1" cy="121.0" r="3.8" stroke="#3f5c5c" stroke-width="1" stroke-dasharray="2 1.2" stroke-linecap="butt"/>
<circle cx="313.6" cy="200.8" r="3.8" stroke="#566060" stroke-width="1" stroke-dasharray="2 1.2" stroke-linecap="butt"/>
<circle cx="180.9" cy="117.3" r="2.4" stroke="#1bc51b" stroke-width="0.9"/>
<rect x="29.4" y="95.4" width="5.4" height="5.8" rx="0.9" stroke="#0a5a0a" stroke-width="1.0" fill="#000"/>
<line x1="29.4" y1="98.3" x2="34.8" y2="98.3" stroke="#0a5a0a" stroke-width="1.0"/>
<rect x="29.6" y="102.2" width="5" height="5" stroke="#27c9d8" stroke-width="1" fill="#1aa9bd"/>
<rect x="30.3" y="111.5" width="5" height="5" stroke="#d8681a" stroke-width="1" fill="none"/>
<rect x="30.9" y="112.0" width="3.8" height="4.1" rx="0.9" stroke="#d8681a" stroke-width="0.8" fill="#000"/>
<line x1="30.9" y1="114.0" x2="34.7" y2="114.0" stroke="#d8681a" stroke-width="0.8"/>
<rect x="40.0" y="111.5" width="5" height="5" stroke="#c4b400" stroke-width="1" fill="none"/>
<rect x="40.6" y="112.0" width="3.8" height="4.1" rx="0.9" stroke="#c4b400" stroke-width="0.8" fill="#000"/>
<line x1="40.6" y1="114.0" x2="44.4" y2="114.0" stroke="#c4b400" stroke-width="0.8"/>
<rect x="68.7" y="111.4" width="5.4" height="5.8" rx="0.9" stroke="#c4b400" stroke-width="1.0" fill="#000"/>
<line x1="68.7" y1="114.3" x2="74.1" y2="114.3" stroke="#c4b400" stroke-width="1.0"/>
<path d="M68.7 114.3 V112.3 Q68.7 111.4 69.6 111.4 H73.2 Q74.1 111.4 74.1 112.3 V114.3" stroke="#1bc51b" stroke-width="1"/>
<rect x="93.3" y="122.3" width="5.4" height="5.8" rx="0.9" stroke="#c4b400" stroke-width="1.0" fill="#000"/>
<line x1="93.3" y1="125.2" x2="98.7" y2="125.2" stroke="#c4b400" stroke-width="1.0"/>
<rect x="177.7" y="99.6" width="5.4" height="5.8" rx="0.9" stroke="#d09a10" stroke-width="1.0" fill="#000"/>
<line x1="177.7" y1="102.5" x2="183.1" y2="102.5" stroke="#d09a10" stroke-width="1.0"/>
<rect x="208.9" y="126.5" width="5.4" height="5.8" rx="0.9" stroke="#c4b400" stroke-width="1.0" fill="#000"/>
<line x1="208.9" y1="129.4" x2="214.3" y2="129.4" stroke="#c4b400" stroke-width="1.0"/>
<rect x="311.8" y="227.4" width="5.4" height="5.8" rx="0.9" stroke="#c4b400" stroke-width="1.0" fill="#000"/>
<line x1="311.8" y1="230.3" x2="317.2" y2="230.3" stroke="#c4b400" stroke-width="1.0"/>
<rect x="339.7" y="248.5" width="13.8" height="13.5" rx="1.2" stroke="#bfae00" stroke-width="1.2"/>
<rect x="344.2" y="252.3" width="4.9" height="5.2" rx="0.9" stroke="#c4b400" stroke-width="0.9" fill="#000"/>
<line x1="344.2" y1="254.9" x2="349.0" y2="254.9" stroke="#c4b400" stroke-width="0.9"/>
<rect x="92.4" y="366.7" width="11" height="11" stroke="#1bc51b" stroke-width="1.1"/>
<polyline points="95.6,375.0 98.0,369.3 100.4,375.0 95.6,375.0" stroke="#1bc51b" stroke-width="0.9" />
<polyline points="170.6,189.0 170.6,193.5 172.0,192.3" stroke="#c9a7a7" stroke-width="1.1" />
<polyline points="337.6,243.0 337.6,248.0 339.0,246.6" stroke="#eadada" stroke-width="1.2" />
<polyline points="132.1,357.5 132.1,361.5" stroke="#8a9a9a" stroke-width="1.1" />
</svg><!--/MAP-->
<div class="abs" id="rtool"></div>
<div class="abs" id="status"></div>
<div class="abs" id="statusline"></div>
<div class="abs" id="hscroll"></div>
<div class="abs" id="console"></div>


<!-- main caption buttons -->
<svg class="abs" style="left:788px;top:0" width="47" height="10" viewBox="0 0 47 10" fill="none">
<defs><linearGradient id="gb" x1="0" y1="0" x2="0" y2="1"><stop offset="0" stop-color="#9cc4da"/><stop offset="0.5" stop-color="#5f9fc2"/><stop offset="1" stop-color="#4b8fb6"/></linearGradient>
<linearGradient id="gr" x1="0" y1="0" x2="0" y2="1"><stop offset="0" stop-color="#e39a90"/><stop offset="0.5" stop-color="#cf4f40"/><stop offset="1" stop-color="#c23a2c"/></linearGradient></defs>
<path d="M0.8 -1 H12.2 V7.8 H2.8 Q0.8 7.8 0.8 5.8 Z" fill="url(#gb)" stroke="#1d4f6a" stroke-width="0.6"/>
<rect x="12.2" y="-1" width="12.4" height="8.8" fill="url(#gb)" stroke="#1d4f6a" stroke-width="0.6"/>
<path d="M24.6 -1 H45.4 V5.8 Q45.4 7.8 43.4 7.8 H24.6 Z" fill="url(#gr)" stroke="#5b1a14" stroke-width="0.6"/>
<rect x="4.4" y="4" width="4.4" height="1.8" rx="0.4" fill="#f4f8fb" stroke="#2b5068" stroke-width="0.4"/>
<rect x="16.4" y="2.2" width="4" height="3.6" rx="0.9" stroke="#2b5068" stroke-width="1.8"/><rect x="16.4" y="2.2" width="4" height="3.6" rx="0.9" stroke="#f4f8fb" stroke-width="1"/>
<path d="M33.2 2.2 L36.8 5.8 M36.8 2.2 L33.2 5.8" stroke="#5b1a14" stroke-width="2" stroke-linecap="round"/><path d="M33.2 2.2 L36.8 5.8 M36.8 2.2 L33.2 5.8" stroke="#fff" stroke-width="1.1" stroke-linecap="round"/>
</svg>
<!-- menu -->
<div class="t" style="left:172px;top:11.6px;font-size:5.2px;color:#111;">Manobras</div>
<div class="t" style="left:201.5px;top:11.6px;font-size:5.2px;color:#111;">Gráficos</div>
<div class="t" style="left:226.2px;top:11.6px;font-size:5.2px;color:#111;">Relatórios</div>
<div class="t" style="left:255px;top:11.6px;font-size:5.2px;color:#111;">Ajuda</div>
<!-- toolbar icons -->
<svg class="abs" style="left:167px;top:18px" width="110" height="13" viewBox="0 0 110 13" fill="none">
<path d="M2.8 3.2 L0.6 4.6 L2.8 6 M2.8 7.4 L0.6 8.8 L2.8 10.2" stroke="#1faa2c" stroke-width="1.3" fill="none"/>
<path d="M11.2 3 L14.6 6.5 L11.2 10 L7.8 6.5 Z" fill="#b8b8b8" stroke="#8e8e8e" stroke-width="0.5"/>
<rect x="20.3" y="1.3" width="11.4" height="10.4" rx="1" fill="#b9d4f2" stroke="#5d8fd0" stroke-width="0.7"/>
<line x1="67.3" y1="2" x2="67.3" y2="11" stroke="#cfd2d7" stroke-width="0.6"/>
<line x1="81.3" y1="2" x2="81.3" y2="11" stroke="#cfd2d7" stroke-width="0.6"/>
<path d="M75.4 3 L71.6 7 H74 L72.6 10.4 L77.4 5.8 H74.8 L76.6 3 Z" fill="#f7b500" stroke="#e59a00" stroke-width="0.3"/>
<rect x="84.4" y="1.3" width="10.6" height="10.4" rx="1" fill="#cfe0f6" stroke="#7aa3dc" stroke-width="0.7"/>
<path d="M88.4 3.6 V9 L89.8 7.8 L90.8 9.8 L91.6 9.4 L90.7 7.5 H92.4 Z" fill="#fff" stroke="#8a8a8a" stroke-width="0.45"/>
</svg>
<div class="t" style="left:189.3px;top:22.4px;font-size:5px;color:#333;letter-spacing:-0.2px;">3ø</div>
<div class="t" style="left:201.6px;top:21.3px;font-size:7px;font-weight:bold;color:#1c1ccf;">A</div>
<div class="t" style="left:213px;top:21.3px;font-size:7px;font-weight:bold;color:#a0189c;">B</div>
<div class="t" style="left:224.4px;top:21.3px;font-size:7px;font-weight:bold;color:#e87510;">C</div>
<!-- bar2 -->
<div class="t mono" style="left:167.3px;top:33.6px;">tar</div>
<div class="abs" style="left:176.5px;top:32.5px;width:0.7px;height:6px;background:#444;"></div>
<!-- right toolbar -->
<svg class="abs" style="left:823px;top:40px" width="12" height="160" viewBox="0 0 12 160" fill="none">
<g stroke="#2e2e2e" stroke-width="0.9" fill="#f4f4f4">
<rect x="2.2" y="15.8" width="6.8" height="6.8" rx="0.6"/>
<rect x="2.2" y="26.3" width="6.8" height="6.8" rx="0.6"/>
<rect x="2.2" y="36.7" width="6.8" height="6.8" rx="0.6"/>
<rect x="2.2" y="50.4" width="6.8" height="6.8" rx="0.6"/>
<rect x="2.2" y="61.1" width="6.8" height="6.8" rx="0.6"/>
<rect x="2.2" y="71.1" width="6.8" height="6.8" rx="0.6"/>
<rect x="2.2" y="81.7" width="6.8" height="6.8" rx="0.6"/>
<rect x="2.2" y="91.9" width="6.8" height="6.8" rx="0.6"/>
<rect x="2.2" y="102.3" width="6.8" height="6.8" rx="0.6"/>
<rect x="2.2" y="113.0" width="6.8" height="6.8" rx="0.6"/>
<rect x="2.2" y="123.2" width="6.8" height="6.8" rx="0.6"/>
</g><g stroke="#3a3a3a" stroke-width="0.8">
<path d="M3.8 20.8 L7.4 17.4 M4.0 18.2 A1.8 1.8 0 0 1 7.0 20.6"/>
<path d="M3.6 31.1 L5.2 28.9 L6.2 30.1 L7.6 28.1 M3.6 27.9 h1.6 v1.4"/>
<path d="M4.9 39.4 h1.4 v1.4 h-1.4 Z"/>
<path d="M3.4 56.0 L7.8 51.6"/>
<path d="M3.4 66.1 Q5.0 62.9 7.8 63.3 M3.4 64.7 h2"/>
<path d="M3.6 76.3 Q5.6 71.9 7.6 76.3 M3.6 75.1 h4"/>
<path d="M3.6 83.5 H7.6 M5.6 83.5 V87.1 M3.6 86.1 H7.6"/>
<path d="M4.0 93.7 h3.2 v3.2 h-3.2 Z M5.0 95.7 L7.2 97.3"/>
<path d="M3.6 107.7 L5.6 103.7 L7.6 107.7 Z"/>
<path d="M3.8 114.6 h3.6 v3.6 h-3.6 Z M3.8 114.6 L7.4 118.2"/>
<path d="M5.6 124.4 V127.6 M4.0 126.2 L5.6 127.8 L7.2 126.2 M3.4 128.8 H7.8"/>
</g>
<path d="M3.4 6 V4.6 Q3.4 2.4 5.6 2.4 Q7.8 2.4 7.8 4.6" stroke="#f0a818" stroke-width="1.1"/><rect x="2.6" y="5" width="6.4" height="4.2" rx="0.6" fill="#f9c440" stroke="#e09a12" stroke-width="0.5"/>
<line x1="2" y1="12.6" x2="9.4" y2="12.6" stroke="#c8c8c8" stroke-width="0.7"/>
<line x1="2" y1="46.8" x2="9.4" y2="46.8" stroke="#c8c8c8" stroke-width="0.7"/>
<line x1="2" y1="133.2" x2="9.4" y2="133.2" stroke="#c8c8c8" stroke-width="0.7"/>
<path d="M3.6 138.8 L7.8 143.2 M7.8 138.8 L3.6 143.2" stroke="#e2222a" stroke-width="1.4" stroke-linecap="round"/>
</svg>
<!-- status -->
<div class="t" style="left:203.2px;top:427.4px;font-size:5px;font-weight:bold;color:#111;letter-spacing:0.06px;">Y 6946787,803</div>
<!-- hscroll -->
<div class="abs" style="left:167px;top:435px;width:479px;height:11px;background:linear-gradient(#fbfbfb,#f1f1f1);border-right:1px solid #6f6f6f;box-sizing:border-box;"></div>
<div class="abs" style="left:638px;top:445px;width:8px;height:1px;background:linear-gradient(90deg,rgba(111,111,111,0),#6f6f6f 50%);"></div>
<div class="abs" style="left:646px;top:435px;width:170px;height:11px;background:linear-gradient(#fcfcfc,#eeeeee);"></div>
<div class="abs" style="left:816.5px;top:435px;width:6.5px;height:11px;background:#f4f4f4;border-right:1px solid #8f8f8f;border-bottom:1px solid #8f8f8f;box-sizing:border-box;"></div>
<svg class="abs" style="left:817px;top:436px" width="18" height="10" viewBox="0 0 18 10"><path d="M1.8 2.4 L4 4.4 L1.8 6.4 Z" fill="#222"/><circle cx="12.4" cy="4.6" r="2.6" fill="none" stroke="#2b8fe0" stroke-width="1.3"/><path d="M12.4 7.2 A2.6 2.6 0 0 0 15 4.6" stroke="#35b04a" stroke-width="1.3" fill="none"/><path d="M12.6 4.6 H15" stroke="#f2b61c" stroke-width="1.1"/></svg>
<!-- console -->
<div class="t mono" style="left:168.4px;top:450px;color:#8a8f96;">7 (convergente).</div>
<div class="t mono" style="left:168.4px;top:457.6px;color:#8a8f96;">Z</div>
<svg class="abs" style="left:828px;top:447px" width="7" height="23" viewBox="0 0 7 23"><path d="M2.4 4.6 L3.4 3.4 L4.4 4.6 Z" fill="#444"/><rect x="1" y="8" width="5" height="7.4" rx="0.8" fill="#f2f2f2" stroke="#a9a9a9" stroke-width="0.5"/><path d="M2.4 19.2 L3.4 20.4 L4.4 19.2 Z" fill="#444"/></svg>

<!-- ===== left window ===== -->
<div class="abs" id="lbody"></div>
<div class="abs" id="lborderR"></div>
<div class="abs" id="mapedge"></div>
<div class="abs" style="left:166.6px;top:425px;width:1.1px;height:45px;background:#b6babd;"></div>
<div class="abs" id="ltitle"></div>
<div class="abs" id="lbottom"></div>
<div class="abs" id="table"></div>
<div class="abs" id="thead"></div>
<div class="t" style="left:9.6px;top:2.6px;font-size:5.25px;color:#000;text-shadow:0 0 0.4px rgba(0,0,0,0.6);">Sequência de Manobras</div>
<!-- app icon -->
<svg class="abs" style="left:1px;top:2px" width="8" height="7" viewBox="0 0 8 7"><rect x="0.5" y="1.5" width="6" height="4" rx="1" fill="#e8f3e0" stroke="#6a9a5a" stroke-width="0.6"/><rect x="1.5" y="3" width="4.5" height="2" fill="#2fa030"/></svg>
<!-- caption buttons -->
<svg class="abs" style="left:120px;top:0" width="47" height="10" viewBox="0 0 47 10" fill="none">
<rect x="4.5" y="4.5" width="4" height="1.6" rx="0.5" fill="#f4f8fb" stroke="#5b7f9b" stroke-width="0.5"/>
<rect x="15.2" y="2.2" width="4.2" height="3.8" rx="0.8" stroke="#5b7f9b" stroke-width="1.6"/><rect x="15.2" y="2.2" width="4.2" height="3.8" rx="0.8" stroke="#f4f8fb" stroke-width="0.9"/>
<path d="M32.2 2.2 L35.8 6 M35.8 2.2 L32.2 6" stroke="#5b7f9b" stroke-width="1.9" stroke-linecap="round"/><path d="M32.2 2.2 L35.8 6 M35.8 2.2 L32.2 6" stroke="#f4f8fb" stroke-width="1" stroke-linecap="round"/>
</svg>
<!-- buttons -->
<div class="btn" style="left:4px;width:50px;"></div>
<div class="btn" style="left:56.5px;width:51px;border-color:#858585;box-shadow:inset 0 0 0 0.5px #d9e8f2,0 1px 0 #bdbdbd;"></div>
<div class="btn" style="left:110.5px;width:50.5px;"></div>
<svg class="abs" style="left:7px;top:14.5px" width="6" height="8" viewBox="0 0 6 8"><path d="M0.8 0.5 H3.8 L5.2 2 V7.5 H0.8 Z" fill="#fff" stroke="#b9b9b9" stroke-width="0.6"/></svg>
<div class="t mono" style="left:15px;top:17.1px;font-size:4.3px;">Novo</div>
<svg class="abs" style="left:60px;top:15.5px" width="7" height="7" viewBox="0 0 7 7"><path d="M0.5 1.5 H2.8 L3.4 2.3 H6.3 V6.3 H0.5 Z" fill="#f6c64a" stroke="#d79a1c" stroke-width="0.5"/><path d="M0.5 6.3 L1.6 3.4 H7 L6.3 6.3 Z" fill="#fbdc7a"/></svg>
<div class="t mono" style="left:68.3px;top:17.1px;font-size:4.3px;">Abrir...</div>
<svg class="abs" style="left:113px;top:15px" width="8" height="8" viewBox="0 0 8 8"><rect x="0.5" y="0.6" width="6.6" height="6.8" rx="0.8" fill="#3a7be0" stroke="#2458b8" stroke-width="0.5"/><rect x="1.6" y="0.9" width="4.4" height="2.4" fill="#eaf2ff"/><rect x="1.6" y="4.6" width="4.4" height="2.4" fill="#8fd06a"/></svg>
<div class="t mono" style="left:122px;top:17.1px;font-size:4.3px;">Salvar...</div>
<!-- start row -->
<div class="t mono" style="left:4.2px;top:35px;font-size:4.3px;">Início</div>
<div class="abs" style="left:21.5px;top:33px;width:60px;height:8px;border:1px solid #8e8e8e;border-radius:1px;background:#fff;box-sizing:border-box;"></div>
<div class="t mono" style="left:23px;top:35px;font-size:4.3px;">17/06/2013 16:29:56</div>
<svg class="abs" style="left:75.5px;top:35.8px" width="4" height="3" viewBox="0 0 4 3"><path d="M0.3 0.4 H3.7 L2 2.7 Z" fill="#222"/></svg>
<!-- row icons -->
<svg class="abs" style="left:95px;top:32px" width="70" height="10" viewBox="0 0 70 10">
<rect x="1.2" y="1.5" width="6" height="6.4" rx="0.6" fill="#d8ecfb" stroke="#4a90d6" stroke-width="0.7"/><path d="M2.6 6.6 L6.6 2.2" stroke="#f0a020" stroke-width="1.4"/>
<path d="M17.9 2 V8" stroke="#2ca63c" stroke-width="1.6"/><path d="M16.2 3.6 L17.9 1.4 L19.6 3.6 Z" fill="#2ca63c"/>
<path d="M31.8 2 V7.4" stroke="#2ca63c" stroke-width="1.6"/><path d="M30.1 6 L31.8 8.4 L33.5 6 Z" fill="#2ca63c"/>
<path d="M43 7.8 V5.2 Q43 3 45.8 3 Q48.6 3 48.6 5.2 V7.8 Z" fill="#4a5a6e"/><rect x="44.6" y="5.6" width="2.4" height="2.2" fill="#9fb0c4"/>
<circle cx="59.8" cy="5.3" r="3" fill="#ee3b2b"/><rect x="58" y="4.8" width="3.6" height="1.1" fill="#ffd9d2"/>
</svg>
<!-- table -->
<div class="abs" style="left:30px;top:45px;width:1px;height:6px;background:#d5d5d5;"></div>
<div class="abs" style="left:94px;top:45px;width:1px;height:6px;background:#d5d5d5;"></div>
<div class="abs" style="left:138px;top:45px;width:1px;height:6px;background:#d5d5d5;"></div>
<div class="abs" style="left:5px;top:51px;width:155px;height:1px;background:#e3e3e3;"></div>
<div class="t mono" style="left:7px;top:46px;font-size:4.3px;">Tempo</div>
<div class="t mono" style="left:32.6px;top:46px;font-size:4.3px;">Manobrável</div>
<div class="t mono" style="left:98px;top:46px;font-size:4.3px;">Tipo</div>
<div class="t mono" style="left:141px;top:46px;font-size:4.3px;">Ação</div>
<div class="t mono" style="left:6px;top:53.5px;font-size:4.3px;">00:00:00</div>
<div class="t mono" style="left:32.9px;top:53.5px;font-size:4.3px;">AL02_RL03(NA)</div>
<div class="t mono" style="left:98px;top:53.5px;font-size:4.3px;">RELIGADOR</div>
<div class="t mono" style="left:141.5px;top:53.5px;font-size:4.3px;">abrir</div>
<div class="t mono" style="left:6px;top:59.6px;font-size:4.3px;">00:00:00</div>
<div class="t mono" style="left:32.9px;top:59.6px;font-size:4.3px;">AL02_RL01</div>
<div class="t mono" style="left:98px;top:59.6px;font-size:4.3px;">RELIGADOR</div>
<div class="t mono" style="left:141.5px;top:59.6px;font-size:4.3px;">fechar</div>
<div class="t mono" style="left:6px;top:65.2px;font-size:4.3px;">00:00:02</div>
<div class="t mono" style="left:32.9px;top:65.2px;font-size:4.3px;">AL02_RL02</div>
<div class="t mono" style="left:98px;top:65.2px;font-size:4.3px;">RELIGADOR</div>
<div class="t mono" style="left:141.5px;top:65.2px;font-size:4.3px;">fechar</div>
<!-- bottom row -->
<svg class="abs" style="left:6px;top:456px" width="8" height="8" viewBox="0 0 8 8"><circle cx="3.7" cy="4" r="2.9" fill="#2f7fd6"/><path d="M2.4 3.6 L3.5 5.2 L5.3 2.6" stroke="#fff" stroke-width="0.9" fill="none"/></svg>
<div class="t mono" style="left:52px;top:457.8px;font-size:4.3px;">Simulação</div>
<svg class="abs" style="left:80px;top:456px" width="82" height="8" viewBox="0 0 82 8" fill="#2a7be0">
<path d="M5.2 1.4 L2 4 L5.2 6.6 Z M8.6 1.4 L5.4 4 L8.6 6.6 Z"/>
<path d="M16.8 1.4 H18 V6.6 H16.8 Z M21.6 1.4 L18.2 4 L21.6 6.6 Z"/>
<path d="M31 1.6 H32.3 V6.6 H31 Z M33.7 1.6 H35 V6.6 H33.7 Z"/>
<path d="M45 1.4 L48.6 4 L45 6.6 Z"/>
<path d="M58.4 1.4 L61.8 4 L58.4 6.6 Z M62 1.4 H63.2 V6.6 H62 Z"/>
<path d="M71.6 1.4 L74.8 4 L71.6 6.6 Z M75 1.4 L78.2 4 L75 6.6 Z"/>
</svg>

</body>
</html>
